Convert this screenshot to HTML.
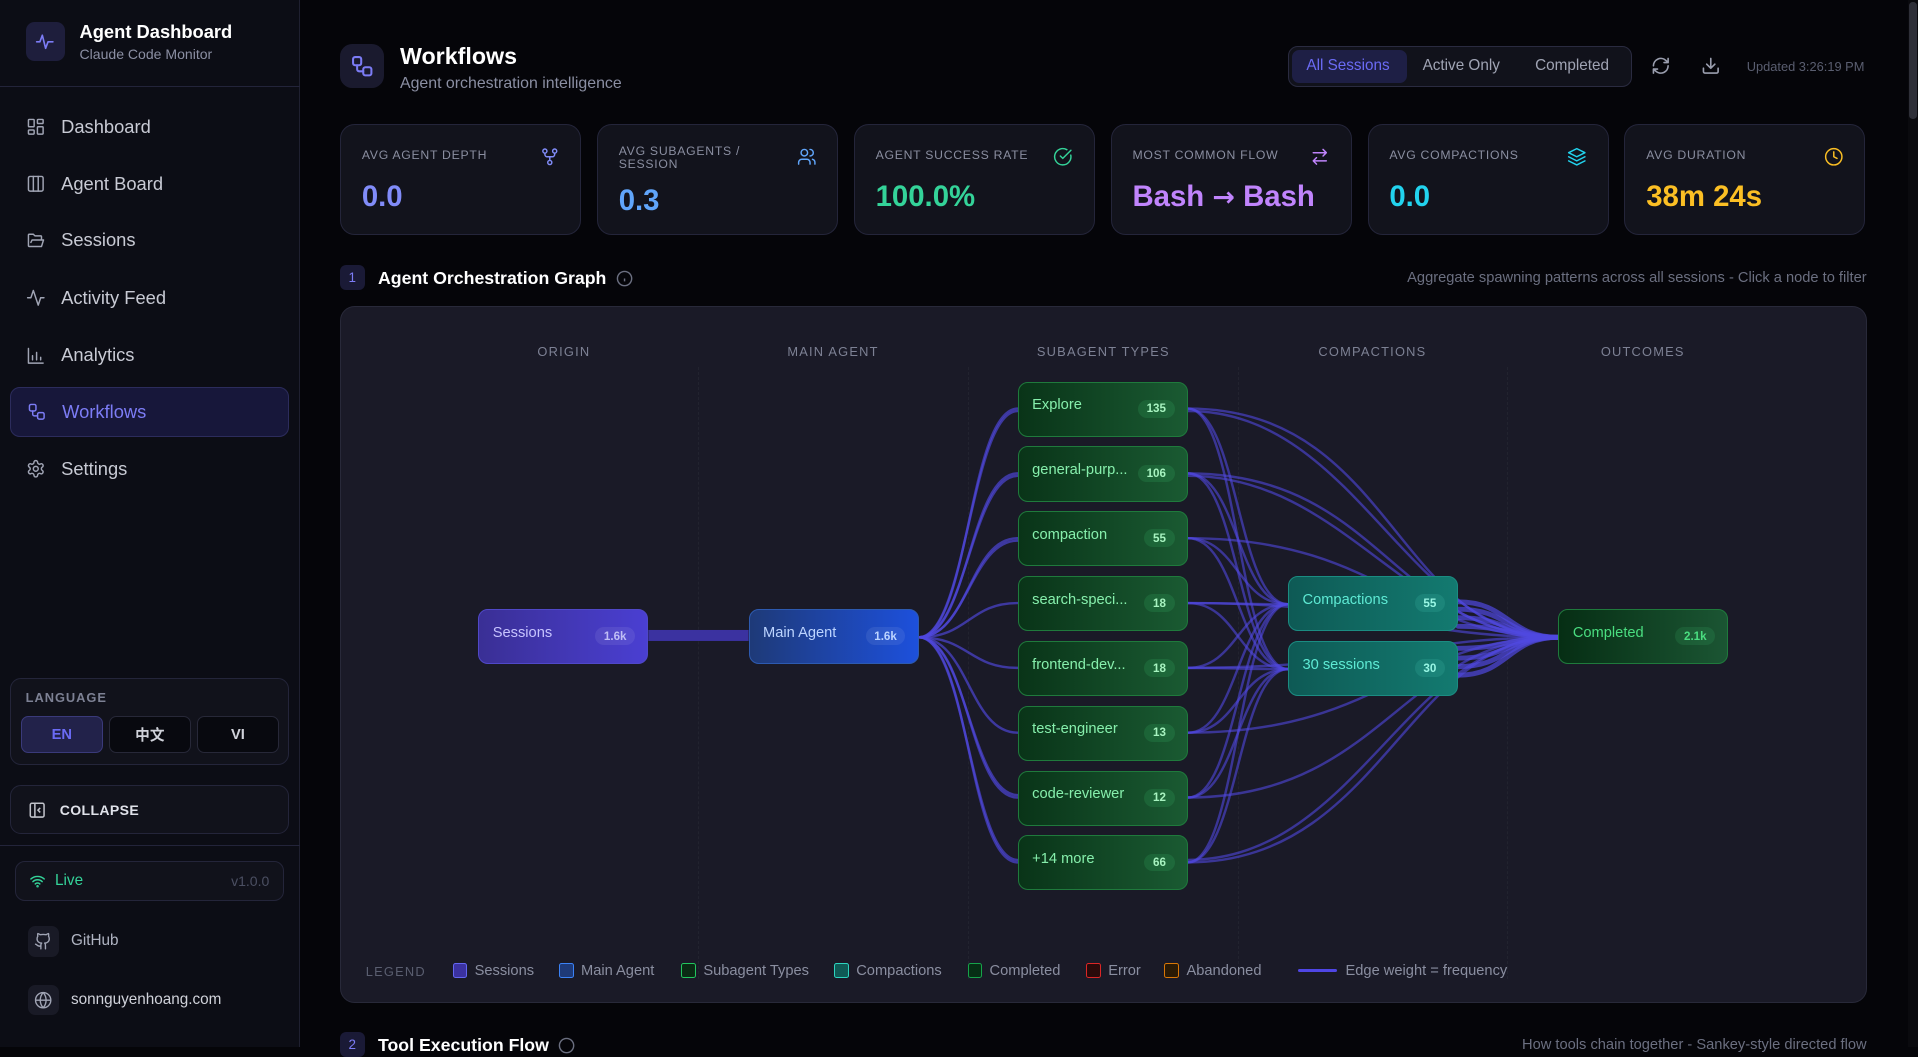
<!DOCTYPE html>
<html><head><meta charset="utf-8">
<style>
html{zoom:1.22321}
*{box-sizing:border-box;margin:0;padding:0}
body{width:1568px;height:856px;overflow:hidden;background:#050509;font-family:"Liberation Sans","Noto Sans CJK SC",sans-serif;color:#e5e7eb;position:relative}
.abs{position:absolute}
.side{left:0;top:0;width:245px;height:856px;background:#0c0d15;border-right:1px solid #1f2030}
.nav{position:absolute;left:8px;width:228px;height:41px;display:flex;align-items:center;padding-left:13px;font-size:15px;color:#c8cad4;border-radius:8px}
.nav svg{width:16px;height:16px;margin-right:13px;stroke:#a0a4b4;fill:none;stroke-width:1.8;stroke-linecap:round;stroke-linejoin:round}
.nav.act{background:#17173a;border:1px solid #2c2c5c;color:#7c7cf5}
.nav.act svg{stroke:#7c7cf5}
.card{position:absolute;top:101px;width:197px;height:91px;background:#12131c;border:1px solid #24253a;border-radius:12px}
.card .l{position:absolute;left:17px;top:20px;font-size:10px;letter-spacing:.6px;color:#8a8ea0;line-height:10.5px}
.card .v{position:absolute;left:17px;top:45px;font-size:24px;font-weight:bold}
.card svg{position:absolute;right:17px;top:18px;width:16px;height:16px;fill:none;stroke-width:1.8;stroke-linecap:round;stroke-linejoin:round}
.colh{position:absolute;top:281px;font-size:10.5px;letter-spacing:1px;color:#7d8194;transform:translateX(-50%)}
.node{position:absolute;width:139px;height:45px;border-radius:8px;font-size:12px}
.node .t{position:absolute;left:11px;top:12px}
.node .b{position:absolute;right:10px;top:14px;font-size:9.5px;padding:2px 7px;border-radius:8px;font-weight:bold}
.sub{background:linear-gradient(90deg,#093418,#1a5a32);border:1px solid #1f7a3c;color:#86efac}
.sub .b{background:rgba(74,222,128,.14);color:#a7f3c0}
.cmp{background:linear-gradient(90deg,#0e5a55,#137a70);border:1px solid #1b8c82;color:#5eead4}
.cmp .b{background:rgba(94,234,212,.13);color:#99f6e4}
.leg{position:absolute;top:787px;font-size:12px;color:#8a8ea0;display:flex;align-items:center}
.leg i{display:inline-block;width:12px;height:12px;border-radius:2px;margin-right:6px;border:1.5px solid}
.lb{position:absolute;top:585px;width:67px;height:31px;border:1px solid #272838;border-radius:6px;background:#08090f;font-size:12px;font-weight:bold;display:flex;align-items:center;justify-content:center;color:#d0d2da}
</style></head><body>

<div class="abs side">
  <div class="abs" style="left:21px;top:18px;width:32px;height:32px;border-radius:7px;background:#1e1e3c;display:flex;align-items:center;justify-content:center">
    <svg width="16" height="16" viewBox="0 0 24 24" fill="none" stroke="#7c7cf5" stroke-width="2" stroke-linecap="round" stroke-linejoin="round"><path d="M2 12h4l3-8 4 16 3-8h6"/></svg>
  </div>
  <div class="abs" style="left:65px;top:17px;font-size:15px;font-weight:bold;color:#fff">Agent Dashboard</div>
  <div class="abs" style="left:65px;top:38px;font-size:11.5px;color:#8b8fa3">Claude Code Monitor</div>
  <div class="abs" style="left:0;top:70px;width:245px;height:1px;background:#23243a"></div>

  <div class="nav" style="top:83px"><svg viewBox="0 0 24 24"><rect x="3" y="3" width="7" height="9" rx="1"/><rect x="14" y="3" width="7" height="5" rx="1"/><rect x="14" y="12" width="7" height="9" rx="1"/><rect x="3" y="16" width="7" height="5" rx="1"/></svg>Dashboard</div>
  <div class="nav" style="top:130px"><svg viewBox="0 0 24 24"><rect x="3" y="3" width="18" height="18" rx="2"/><path d="M9 3v18M15 3v18"/></svg>Agent Board</div>
  <div class="nav" style="top:176px"><svg viewBox="0 0 24 24"><path d="M6 14l1.5-3h14l-2.5 8H4a1 1 0 01-1-1V5a1 1 0 011-1h5l2 2h7a1 1 0 011 1v4"/></svg>Sessions</div>
  <div class="nav" style="top:223px"><svg viewBox="0 0 24 24"><path d="M22 12h-4l-3 9L9 3l-3 9H2"/></svg>Activity Feed</div>
  <div class="nav" style="top:270px"><svg viewBox="0 0 24 24"><path d="M3 3v18h18M8 17v-5M13 17V8M18 17v-3"/></svg>Analytics</div>
  <div class="nav act" style="top:316px"><svg viewBox="0 0 24 24"><rect x="3" y="3" width="8" height="8" rx="2"/><path d="M7 11v4a2 2 0 002 2h4"/><rect x="13" y="13" width="8" height="8" rx="2"/></svg>Workflows</div>
  <div class="nav" style="top:363px"><svg viewBox="0 0 24 24"><path d="M12.22 2h-.44a2 2 0 00-2 2v.18a2 2 0 01-1 1.73l-.43.25a2 2 0 01-2 0l-.15-.08a2 2 0 00-2.73.73l-.22.38a2 2 0 00.73 2.73l.15.1a2 2 0 011 1.72v.51a2 2 0 01-1 1.74l-.15.09a2 2 0 00-.73 2.73l.22.38a2 2 0 002.73.73l.15-.08a2 2 0 012 0l.43.25a2 2 0 011 1.73V20a2 2 0 002 2h.44a2 2 0 002-2v-.18a2 2 0 011-1.73l.43-.25a2 2 0 012 0l.15.08a2 2 0 002.73-.73l.22-.39a2 2 0 00-.73-2.73l-.15-.08a2 2 0 01-1-1.74v-.5a2 2 0 011-1.74l.15-.09a2 2 0 00.73-2.73l-.22-.38a2 2 0 00-2.73-.73l-.15.08a2 2 0 01-2 0l-.43-.25a2 2 0 01-1-1.73V4a2 2 0 00-2-2z"/><circle cx="12" cy="12" r="3"/></svg>Settings</div>

  <div class="abs" style="left:8px;top:554px;width:228px;height:71px;border:1px solid #24253a;border-radius:9px;background:#11121b"></div>
  <div class="abs" style="left:21px;top:564px;font-size:10.5px;letter-spacing:.8px;color:#7d8194;font-weight:bold">LANGUAGE</div>
  <div class="lb" style="left:17px;background:#22224a;border-color:#3a3a7a;color:#6b6bf5">EN</div>
  <div class="lb" style="left:89px">中文</div>
  <div class="lb" style="left:161px">VI</div>

  <div class="abs" style="left:8px;top:642px;width:228px;height:40px;border:1px solid #24253a;border-radius:9px;background:#11121b;display:flex;align-items:center;padding-left:14px;font-size:11.5px;font-weight:bold;color:#e0e2ea;letter-spacing:.3px">
    <svg width="15" height="15" viewBox="0 0 24 24" fill="none" stroke="#c0c2ca" stroke-width="2" style="margin-right:11px"><rect x="3" y="3" width="18" height="18" rx="2"/><path d="M9 3v18M16 9l-3 3 3 3"/></svg>COLLAPSE</div>
  <div class="abs" style="left:0;top:691px;width:245px;height:1px;background:#23243a"></div>

  <div class="abs" style="left:12px;top:704px;width:220px;height:33px;border:1px solid #24253a;border-radius:8px;background:#11121b"></div>
  <svg class="abs" style="left:24px;top:714px" width="14" height="13" viewBox="0 0 24 24" fill="none" stroke="#34d399" stroke-width="2.2" stroke-linecap="round"><path d="M2 9a15 15 0 0120 0M5 13a10 10 0 0114 0M8.5 16.5a5 5 0 017 0"/><circle cx="12" cy="20" r=".8"/></svg>
  <div class="abs" style="left:45px;top:713px;font-size:12.5px;color:#34d399">Live</div>
  <div class="abs" style="right:24px;top:714px;font-size:11.5px;color:#4b4f62">v1.0.0</div>

  <div class="abs" style="left:23px;top:757px;width:25px;height:25px;border-radius:6px;background:#191a26"></div>
  <svg class="abs" style="left:28px;top:762px" width="15" height="15" viewBox="0 0 24 24" fill="none" stroke="#a0a4b4" stroke-width="1.8" stroke-linecap="round" stroke-linejoin="round"><path d="M15 22v-4a4.8 4.8 0 00-1-3.5c3 0 6-2 6-5.5.08-1.25-.27-2.48-1-3.5.28-1.15.28-2.35 0-3.5 0 0-1 0-3 1.5-2.640-.5-5.36-.5-8 0C6 2 5 2 5 2c-.3 1.15-.3 2.35 0 3.5A5.4 5.4 0 004 9c0 3.5 3 5.5 6 5.5-.39.49-.68 1.05-.85 1.65S8.930 17.38 9 18v4M9 18c-4.5 2-5-2-7-2"/></svg>
  <div class="abs" style="left:58px;top:762px;font-size:12.5px;color:#b0b4c2">GitHub</div>
  <div class="abs" style="left:23px;top:805px;width:25px;height:25px;border-radius:6px;background:#191a26"></div>
  <svg class="abs" style="left:28px;top:810px" width="15" height="15" viewBox="0 0 24 24" fill="none" stroke="#a0a4b4" stroke-width="1.8"><circle cx="12" cy="12" r="10"/><path d="M2 12h20M12 2a15 15 0 010 20M12 2a15 15 0 000 20"/></svg>
  <div class="abs" style="left:58px;top:810px;font-size:12.5px;color:#d0d2da">sonnguyenhoang.com</div>
</div>

<!-- header -->
<div class="abs" style="left:278px;top:36px;width:36px;height:36px;border-radius:10px;background:#1a1a2e;display:flex;align-items:center;justify-content:center">
  <svg width="20" height="20" viewBox="0 0 24 24" fill="none" stroke="#7c7cf5" stroke-width="2" stroke-linecap="round"><rect x="3" y="3" width="8" height="8" rx="2"/><path d="M7 11v4a2 2 0 002 2h4"/><rect x="13" y="13" width="8" height="8" rx="2"/></svg>
</div>
<div class="abs" style="left:327px;top:35px;font-size:19px;font-weight:bold;color:#fff">Workflows</div>
<div class="abs" style="left:327px;top:61px;font-size:13px;color:#8b8fa3">Agent orchestration intelligence</div>

<div class="abs" style="left:1053px;top:38px;width:281px;height:33px;border:1px solid #2a2b40;border-radius:8px;background:#11121b"></div>
<div class="abs" style="left:1056px;top:41px;width:94px;height:27px;border-radius:6px;background:#1e1f45"></div>
<div class="abs" style="left:1068px;top:47px;font-size:12.5px;color:#6b6bf5">All Sessions</div>
<div class="abs" style="left:1163px;top:47px;font-size:12.5px;color:#a0a4b4">Active Only</div>
<div class="abs" style="left:1255px;top:47px;font-size:12.5px;color:#a0a4b4">Completed</div>
<svg class="abs" style="left:1350px;top:46px" width="16" height="16" viewBox="0 0 24 24" fill="none" stroke="#9a9eae" stroke-width="2" stroke-linecap="round" stroke-linejoin="round"><path d="M3 12a9 9 0 0115-6.7L21 8M21 3v5h-5M21 12a9 9 0 01-15 6.7L3 16M3 21v-5h5"/></svg>
<svg class="abs" style="left:1391px;top:46px" width="16" height="16" viewBox="0 0 24 24" fill="none" stroke="#9a9eae" stroke-width="2" stroke-linecap="round" stroke-linejoin="round"><path d="M21 15v4a2 2 0 01-2 2H5a2 2 0 01-2-2v-4M7 10l5 5 5-5M12 15V3"/></svg>
<div class="abs" style="left:1428px;top:48px;font-size:10.5px;color:#5a5e70">Updated 3:26:19 PM</div>

<!-- cards -->
<div class="card" style="left:278px"><div class="l">AVG AGENT DEPTH</div><div class="v" style="color:#818cf8">0.0</div><svg viewBox="0 0 24 24" stroke="#818cf8"><circle cx="6" cy="5" r="2.5"/><circle cx="18" cy="5" r="2.5"/><circle cx="12" cy="19" r="2.5"/><path d="M6 8v1a3 3 0 003 3h6a3 3 0 003-3V8M12 12v4"/></svg></div>
<div class="card" style="left:488px"><div class="l" style="top:17px">AVG SUBAGENTS /<br>SESSION</div><div class="v" style="color:#60a5fa;top:49px">0.3</div><svg viewBox="0 0 24 24" stroke="#60a5fa"><circle cx="9" cy="7" r="4"/><path d="M2 21v-2a4 4 0 014-4h6a4 4 0 014 4v2M16 3a4 4 0 010 8M22 21v-2a4 4 0 00-3-3.9"/></svg></div>
<div class="card" style="left:698px"><div class="l">AGENT SUCCESS RATE</div><div class="v" style="color:#34d399">100.0%</div><svg viewBox="0 0 24 24" stroke="#34d399"><path d="M21.8 10A10 10 0 1117 3.3"/><path d="M9 11l3 3L22 4"/></svg></div>
<div class="card" style="left:908px"><div class="l">MOST COMMON FLOW</div><div class="v" style="color:#c084fc">Bash <span style="font-family:'DejaVu Sans',sans-serif;font-size:22px">→</span> Bash</div><svg viewBox="0 0 24 24" stroke="#c084fc"><path d="M16 3l4 4-4 4M20 7H4M8 21l-4-4 4-4M4 17h16"/></svg></div>
<div class="card" style="left:1118px"><div class="l">AVG COMPACTIONS</div><div class="v" style="color:#22d3ee">0.0</div><svg viewBox="0 0 24 24" stroke="#22d3ee"><path d="M12 2L2 7l10 5 10-5-10-5zM2 12l10 5 10-5M2 17l10 5 10-5"/></svg></div>
<div class="card" style="left:1328px"><div class="l">AVG DURATION</div><div class="v" style="color:#fbbf24">38m 24s</div><svg viewBox="0 0 24 24" stroke="#fbbf24"><circle cx="12" cy="12" r="10"/><path d="M12 6v6l4 2"/></svg></div>

<!-- section 1 header -->
<div class="abs" style="left:278px;top:217px;width:20px;height:20px;border-radius:5px;background:#1a1a36;color:#7c7cf5;font-size:11px;display:flex;align-items:center;justify-content:center">1</div>
<div class="abs" style="left:309px;top:219px;font-size:14.5px;font-weight:bold;color:#fff">Agent Orchestration Graph</div>
<svg class="abs" style="left:504px;top:221px" width="14" height="14" viewBox="0 0 24 24" fill="none" stroke="#6b6f80" stroke-width="2"><circle cx="12" cy="12" r="10"/><path d="M12 16v-4M12 8h.01"/></svg>
<div class="abs" style="right:42px;top:221px;font-size:12px;color:#6b6f80">Aggregate spawning patterns across all sessions - Click a node to filter</div>

<!-- graph panel -->
<div class="abs" style="left:278px;top:250px;width:1248px;height:570px;background:#1a1a27;border:1px solid #282939;border-radius:12px"></div>
<div class="abs" style="left:571px;top:300px;height:500px;border-left:1px dashed #22232f"></div>
<div class="abs" style="left:791px;top:300px;height:500px;border-left:1px dashed #22232f"></div>
<div class="abs" style="left:1012px;top:300px;height:500px;border-left:1px dashed #22232f"></div>
<div class="abs" style="left:1232px;top:300px;height:500px;border-left:1px dashed #22232f"></div>
<div class="colh" style="left:461px">ORIGIN</div>
<div class="colh" style="left:681px">MAIN AGENT</div>
<div class="colh" style="left:902px">SUBAGENT TYPES</div>
<div class="colh" style="left:1122px">COMPACTIONS</div>
<div class="colh" style="left:1343px">OUTCOMES</div>

<svg class="abs" style="left:0;top:0" width="1568" height="856" fill="none" stroke-linecap="round">
  <rect x="530" y="515" width="82" height="9" fill="#3b32a0" stroke="none"/>
  <g stroke="#5048e0" stroke-opacity=".65" stroke-width="2">
    <path d="M751 521C792 521 792 334 832 334"/><path d="M751 521C790 521 794 336 832 336"/>
    <path d="M751 521C792 521 792 387 832 387"/><path d="M751 521C790 521 794 389 832 389"/>
    <path d="M751 521C792 521 792 440 832 440"/><path d="M751 521C790 521 794 442 832 442"/>
    <path d="M751 521C792 521 792 493 832 493"/>
    <path d="M751 521C792 521 792 546 832 546"/>
    <path d="M751 521C792 521 792 599 832 599"/>
    <path d="M751 521C792 521 792 652 832 652"/><path d="M751 521C790 521 794 650 832 650"/>
    <path d="M751 521C792 521 792 705 832 705"/><path d="M751 521C790 521 794 703 832 703"/>
  </g>
  <g stroke="#5048e0" stroke-opacity=".6" stroke-width="2">
    <path d="M971 334C1012 334 1012 494 1053 494"/><path d="M971 334C1012 334 1012 547 1053 547"/><path d="M971 334C1140 334 1140 521 1274 521"/><path d="M971 336C1110 336 1150 521 1274 521"/>
    <path d="M971 387C1012 387 1012 494 1053 494"/><path d="M971 387C1012 387 1012 547 1053 547"/><path d="M971 387C1130 387 1140 521 1274 521"/><path d="M971 389C1100 389 1150 521 1274 521"/>
    <path d="M971 440C1012 440 1012 494 1053 494"/><path d="M971 440C1012 440 1012 547 1053 547"/><path d="M971 440C1130 440 1150 521 1274 521"/>
    <path d="M971 493C1012 493 1012 494 1053 494"/><path d="M971 493C1012 493 1012 547 1053 547"/><path d="M971 493C1130 493 1150 521 1274 521"/>
    <path d="M971 546C1012 546 1012 494 1053 494"/><path d="M971 546C1012 546 1012 547 1053 547"/><path d="M971 546C1130 546 1150 521 1274 521"/>
    <path d="M971 599C1012 599 1012 494 1053 494"/><path d="M971 599C1012 599 1012 547 1053 547"/><path d="M971 599C1130 599 1150 521 1274 521"/>
    <path d="M971 652C1012 652 1012 494 1053 494"/><path d="M971 652C1012 652 1012 547 1053 547"/><path d="M971 652C1130 652 1150 521 1274 521"/>
    <path d="M971 705C1012 705 1012 494 1053 494"/><path d="M971 705C1012 705 1012 547 1053 547"/><path d="M971 705C1130 705 1150 521 1274 521"/><path d="M971 703C1110 703 1150 521 1274 521"/>
  </g>
  <g stroke="#5048e0" stroke-opacity=".7" stroke-width="4">
    <path d="M1192 492C1233 492 1233 521 1274 521"/><path d="M1192 498C1233 498 1233 521 1274 521"/><path d="M1192 505C1233 505 1233 521 1274 521"/><path d="M1192 512C1233 512 1233 521 1274 521"/>
    <path d="M1192 530C1233 530 1233 521 1274 521"/><path d="M1192 538C1233 538 1233 521 1274 521"/><path d="M1192 545C1233 545 1233 521 1274 521"/><path d="M1192 552C1233 552 1233 521 1274 521"/>
  </g>
</svg>

<div class="node" style="left:391px;top:498px;background:linear-gradient(90deg,#3a2f95,#4a3fd2);border:1px solid #5048c8;color:#c7c4ff"><span class="t">Sessions</span><span class="b" style="background:rgba(255,255,255,.08);color:#c0bef5">1.6k</span></div>
<div class="node" style="left:612px;top:498px;background:linear-gradient(90deg,#1e3a78,#1d50dc);border:1px solid #2d5ab0;color:#bcd4ff"><span class="t">Main Agent</span><span class="b" style="background:rgba(255,255,255,.08);color:#bcd4ff">1.6k</span></div>

<div class="node sub" style="left:832px;top:312px"><span class="t">Explore</span><span class="b">135</span></div>
<div class="node sub" style="left:832px;top:365px"><span class="t">general-purp...</span><span class="b">106</span></div>
<div class="node sub" style="left:832px;top:418px"><span class="t">compaction</span><span class="b">55</span></div>
<div class="node sub" style="left:832px;top:471px"><span class="t">search-speci...</span><span class="b">18</span></div>
<div class="node sub" style="left:832px;top:524px"><span class="t">frontend-dev...</span><span class="b">18</span></div>
<div class="node sub" style="left:832px;top:577px"><span class="t">test-engineer</span><span class="b">13</span></div>
<div class="node sub" style="left:832px;top:630px"><span class="t">code-reviewer</span><span class="b">12</span></div>
<div class="node sub" style="left:832px;top:683px"><span class="t">+14 more</span><span class="b">66</span></div>

<div class="node cmp" style="left:1053px;top:471px"><span class="t">Compactions</span><span class="b">55</span></div>
<div class="node cmp" style="left:1053px;top:524px"><span class="t">30 sessions</span><span class="b">30</span></div>

<div class="node" style="left:1274px;top:498px;background:linear-gradient(90deg,#062e14,#1b5533);border:1px solid #1f7a3c;color:#4ade80"><span class="t">Completed</span><span class="b" style="background:rgba(74,222,128,.12);color:#4ade80">2.1k</span></div>

<!-- legend -->
<div class="leg" style="left:299px;font-size:10.5px;letter-spacing:1px;color:#5a5e70;top:788px">LEGEND</div>
<div class="leg" style="left:370px"><i style="border-color:#6366f1;background:#3b32a0"></i>Sessions</div>
<div class="leg" style="left:457px"><i style="border-color:#3b82f6;background:#1e3a78"></i>Main Agent</div>
<div class="leg" style="left:557px"><i style="border-color:#22c55e;background:#0a2a14"></i>Subagent Types</div>
<div class="leg" style="left:682px"><i style="border-color:#2dd4bf;background:#0f5a55"></i>Compactions</div>
<div class="leg" style="left:791px"><i style="border-color:#16a34a;background:#062e14"></i>Completed</div>
<div class="leg" style="left:888px"><i style="border-color:#dc2626;background:#2a0a0a"></i>Error</div>
<div class="leg" style="left:952px"><i style="border-color:#d97706;background:#2a1a05"></i>Abandoned</div>
<div class="leg" style="left:1061px"><span style="display:inline-block;width:32px;height:3px;background:#4f46e5;margin-right:7px;border-radius:2px"></span>Edge weight = frequency</div>

<!-- section 2 -->
<div class="abs" style="left:278px;top:844px;width:20px;height:20px;border-radius:5px;background:#1a1a36;color:#7c7cf5;font-size:11px;display:flex;align-items:center;justify-content:center">2</div>
<div class="abs" style="left:309px;top:846px;font-size:14.5px;font-weight:bold;color:#fff">Tool Execution Flow</div>
<svg class="abs" style="left:456px;top:848px" width="14" height="14" viewBox="0 0 24 24" fill="none" stroke="#6b6f80" stroke-width="2"><circle cx="12" cy="12" r="10"/></svg>
<div class="abs" style="right:42px;top:848px;font-size:12px;color:#6b6f80">How tools chain together - Sankey-style directed flow</div>

<!-- scrollbar -->
<div class="abs" style="left:1560px;top:0;width:8px;height:856px;background:#0a0a0e"></div>
<div class="abs" style="left:1561px;top:2px;width:6px;height:95px;border-radius:3px;background:#2e2f38"></div>
</body></html>
